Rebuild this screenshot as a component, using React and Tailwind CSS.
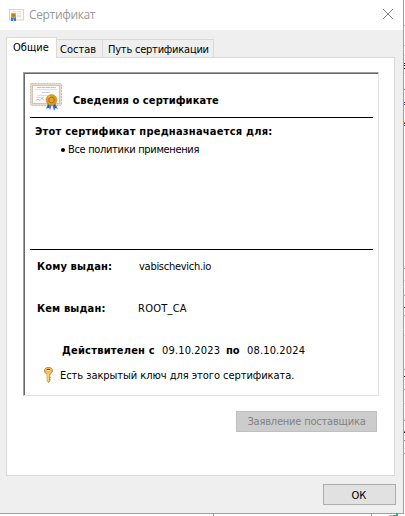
const edgeMarks = [
  [25, 'bg-[#b0b0b0]'], [45, 'bg-[#b0b0b0]'], [55, 'bg-[#d8d8d8]'], [73, 'bg-[#d8d8d8]'],
  [89, 'bg-[#808080]'], [268, 'bg-[#808080]'], [280, 'bg-[#d8d8d8]'], [295, 'bg-[#b0b0b0]'],
  [315, 'bg-[#b0b0b0]'], [335, 'bg-[#d8d8d8]'], [369, 'bg-[#a0a0a0]'], [376, 'bg-black'],
  [389, 'bg-[#a0a0a0]'], [403, 'bg-[#d8d8d8]'], [420, 'bg-[#a0a0a0]'], [440, 'bg-[#a0a0a0]'],
  [453, 'bg-[#a0a0a0]'], [65, 'bg-black'], [63, 'bg-black'], [68, 'bg-black'],
  [102, 'bg-[#3545a0]'], [104, 'bg-[#3545a0]'], [122, 'bg-[#c08030]'], [123, 'bg-[#3545a0]'],
  [125, 'bg-[#3545a0]'], [307, 'bg-[#206080]'], [431, 'bg-[#c08030]'], [432, 'bg-[#302040]'],
];

function SmallCertificate() {
  return (
    <svg className="mt-[9px] ml-[9px] h-3 w-[15px] shrink-0" viewBox="0 0 15 12">
      <rect x="0.5" y="0.5" width="14" height="10.5" fill="#fbf8f4" stroke="#efd2a5" />
      <path d="M3 2.5H7M8 2.5H12M8 4.5H12" stroke="#dfe3ee" />
      <path d="M8 7H12" stroke="#e3e3e3" strokeWidth="2" />
      <path d="M2 8V12H4L4.6 9L5 12H7V8Z" fill="#3478df" />
      <rect x="2" y="4" width="5" height="5" rx="1" fill="#dca01c" />
      <circle cx="4.5" cy="6.6" r="1.4" fill="#b87b0c" />
    </svg>
  );
}

function Certificate() {
  return (
    <svg className="h-7 w-8 shrink-0" viewBox="0 0 32 28">
      <rect x="0.5" y="0.5" width="31" height="22" rx="1" fill="#e4d8c8" stroke="#cbbfae" strokeDasharray="2 1" />
      <rect x="1" y="1" width="30" height="21" fill="#e6dbcc" />
      <rect x="2.5" y="2.5" width="27" height="18" fill="#fcfcfc" stroke="#d3c5b0" />
      <path d="M7 4.5H26" stroke="#b9bdd8" strokeDasharray="4 .5" />
      <path d="M5 6.5H27" stroke="#dde0ef" />
      <path d="M12 9.5H20" stroke="#c5c9e0" strokeDasharray="3 .5" />
      <path d="M7 12.5H18M6 14.5H14" stroke="#dcdce3" />
      <path d="M6 17.5L8 16L10 17.5L12 15L14 17.5" stroke="#b2b2c2" fill="none" strokeWidth=".8" />
      <path d="M18 20L16 26L19 24.5L20 27.5L22 21L24 28L25.5 25L28 26L25 20Z" fill="#3a7be6" />
      <path d="M19 21L18 25M24 21L25.5 25" stroke="#1b4fb4" />
      <circle cx="21.5" cy="17" r="5.4" fill="#dc9c1a" stroke="#c28512" strokeWidth=".6" />
      <circle cx="21.5" cy="17" r="2.8" fill="#dca43a" stroke="#a96f08" strokeWidth=".9" />
      <path d="M18.2 14.5L20 12.8" stroke="#f6cf74" />
    </svg>
  );
}

function Key() {
  return (
    <svg className="mt-[-2px] h-4 w-[9px] shrink-0" viewBox="0 0 9 16">
      <path d="M.6 2.5L2.5 .6H6.5L8.4 2.5V5L6.3 7H5.8V14L4.6 15.4L3.2 14V7H2.6L.6 5Z" fill="#f5bd50" stroke="#b97820" strokeWidth=".8" />
      <path d="M2.8 2.5H6.2" stroke="#6d5026" />
      <path d="M3 3.5H6" stroke="#fff3d5" />
      <path d="M4 6V14" stroke="#ffe29a" />
      <path d="M5.5 10.5H6.4M5.5 12.5H6.4" stroke="#b97820" />
    </svg>
  );
}

export default function App() {
  return (
    <div className="relative h-[516px] w-[405px] overflow-hidden bg-white font-['DejaVu_Sans_Condensed','DejaVu_Sans',sans-serif] text-[11px] leading-[14px] whitespace-nowrap text-black [font-stretch:condensed]">
      <div className="flex h-[514px] w-[404px] flex-col border-r border-b border-[#a0a0a0] bg-[#efefef]">
        <header className="flex h-[30px] shrink-0 bg-white">
          <SmallCertificate />
          <h1 className="mt-[7px] ml-[5px] font-['Open_Sans',sans-serif] text-[12px] leading-4 tracking-[-0.35px] text-[#999] [font-stretch:normal]">Сертификат</h1>
          <svg className="mt-[9px] mr-[10px] ml-auto h-[10px] w-[10px]" viewBox="0 0 10 10">
            <path d="M0 0L10 10M10 0L0 10" stroke="#858585" />
          </svg>
        </header>

        <nav className="mt-[7px] ml-[6px] flex h-5 shrink-0 items-end">
          <div className="z-10 -mb-px h-[21px] w-[51px] border border-b-0 border-[#d9d9d9] bg-white pt-[3px] pl-[6px]">Общие</div>
          <div className="h-[18px] w-[46px] border-t border-r border-[#d9d9d9] pt-[3px] pl-[3px]">Состав</div>
          <div className="h-[18px] w-[111px] border-t border-r border-[#d9d9d9] pt-[3px] pl-[5px] tracking-[-0.22px]">Путь сертификации</div>
        </nav>

        <main className="ml-[6px] flex h-[419px] w-[389px] shrink-0 flex-col border border-[#d9d9d9] bg-white pt-[14px] pl-4">
          <section className="h-[324px] w-[356px] border-t border-r border-b border-l border-t-[#a0a0a0] border-r-[#e3e3e3] border-b-[#e3e3e3] border-l-[#a0a0a0]">
            <div className="flex h-[322px] flex-col border-t border-l border-[#696969] pt-[9px] pl-[5px]">
              <div className="flex h-[34px] shrink-0">
                <Certificate />
                <h2 className="mt-[11px] ml-[11px] font-bold tracking-[0.1px]">Сведения о сертификате</h2>
              </div>
              <div className="h-px w-[343px] shrink-0 bg-black" />
              <h3 className="mt-[7px] ml-[5px] font-bold tracking-[0.23px]">Этот сертификат предназначается для:</h3>
              <div className="mt-[4px] ml-[31px] flex items-center gap-[3px]">
                <i className="h-1 w-1 rounded-full bg-black" />
                <span className="tracking-[-0.33px]">Все политики применения</span>
              </div>
              <div className="mt-[92px] h-px w-[343px] shrink-0 bg-black" />
              <div className="mt-[10px] ml-[7px] flex">
                <b className="w-[102px] tracking-[0.15px]">Кому выдан:</b>
                <span className="tracking-[-0.27px]">vabischevich.io</span>
              </div>
              <div className="mt-[28px] ml-[7px] flex">
                <b className="w-[101px] tracking-[0.15px]">Кем выдан:</b>
                <span className="tracking-[0.25px]">ROOT_CA</span>
              </div>
              <div className="mt-[28px] ml-[32px] flex">
                <b className="w-[100px] tracking-[0.22px]">Действителен с</b>
                <span className="w-[64px] tracking-[0.15px]">09.10.2023</span>
                <b className="w-[21px]">по</b>
                <span className="tracking-[0.15px]">08.10.2024</span>
              </div>
              <div className="mt-[11px] ml-[14px] flex h-[14px]">
                <Key />
                <span className="ml-[7px] tracking-[-0.05px]">Есть закрытый ключ для этого сертификата.</span>
              </div>
            </div>
          </section>
          <button className="mt-[15px] ml-[213px] flex h-[21px] w-[141px] items-center justify-center border border-[#bfbfbf] bg-[#ccc] pt-px tracking-[-0.2px] text-[#838383]">Заявление поставщика</button>
        </main>
        <button className="mt-[8px] ml-[323px] flex h-[21px] w-[73px] shrink-0 items-center justify-center border border-[#adadad] bg-[#e1e1e1] pt-[2px] pr-px">ОК</button>
      </div>
      {edgeMarks.map(([top, color]) => (
        <i key={top} className={`absolute left-[404px] h-px w-px ${color}`} style={{ top }} />
      ))}
      <i className="absolute top-[513px] left-[213px] h-[3px] w-px bg-[#999]" />
      <i className="absolute top-[513px] left-[371px] h-[3px] w-px bg-[#999]" />
      <i className="absolute top-[515px] left-[389px] h-px w-[5px] bg-[#bbb]" />
      <i className="absolute top-[515px] left-[393px] h-px w-[4px] bg-[#14b878]" />
      <i className="absolute top-[513px] left-[396px] h-[3px] w-[2px] bg-[#14b878]" />
    </div>
  );
}
